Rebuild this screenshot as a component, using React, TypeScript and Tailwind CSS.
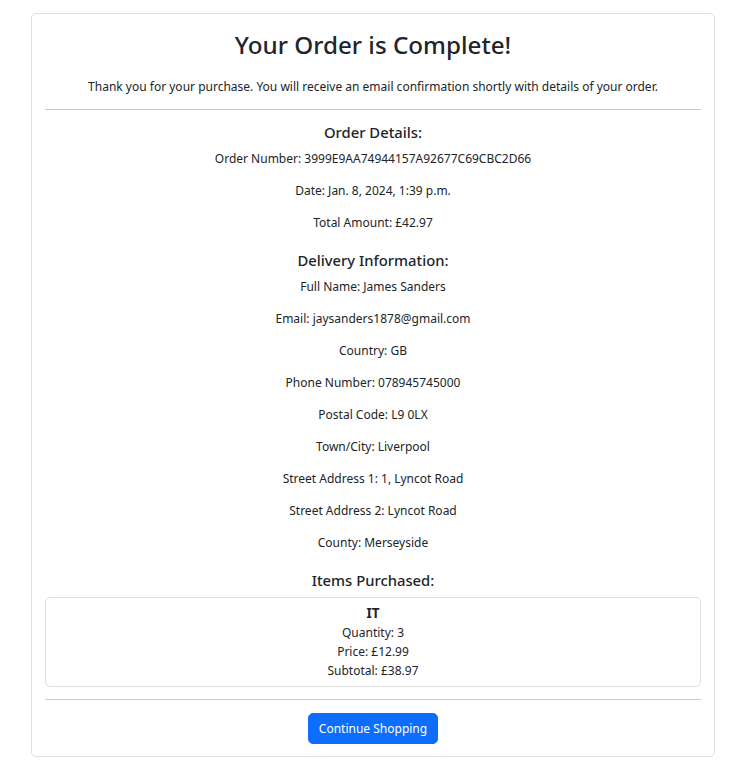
import React from "react";

const order = {
  number: "3999E9AA74944157A92677C69CBC2D66",
  date: "Jan. 8, 2024, 1:39 p.m.",
  total: "£42.97",
};

const delivery: [string, string][] = [
  ["Full Name", "James Sanders"],
  ["Email", "jaysanders1878@gmail.com"],
  ["Country", "GB"],
  ["Phone Number", "078945745000"],
  ["Postal Code", "L9 0LX"],
  ["Town/City", "Liverpool"],
  ["Street Address 1", "1, Lyncot Road"],
  ["Street Address 2", "Lyncot Road"],
  ["County", "Merseyside"],
];

const items = [{ name: "IT", quantity: 3, price: "£12.99", subtotal: "£38.97" }];

const Line: React.FC<{ label: string; value: string | number }> = ({ label, value }) => (
  <p className="mb-[12.8px]">
    {label}: {value}
  </p>
);

const SectionTitle: React.FC<{ children: React.ReactNode }> = ({ children }) => (
  <h5 className="mb-[6.4px] text-[14.8px] font-medium leading-[19.2px]">{children}</h5>
);

const App: React.FC = () => {
  return (
    <div
      className="min-h-screen bg-white px-[31px] pt-[13px] text-[12px] leading-[19.2px] text-[#212529]"
      style={{ fontFamily: '"Noto Sans", "Liberation Sans", sans-serif' }}
    >
      <div className="w-[684px] rounded-[5px] border border-[#dfdfdf] px-[12.8px] pt-[12px] pb-[12px] text-center">
        <h1 className="mb-[12.8px] text-[24.2px] font-medium leading-[38.4px]">Your Order is Complete!</h1>
        <p className="mb-[12.8px]">
          Thank you for your purchase. You will receive an email confirmation shortly with details of your order.
        </p>
        <hr className="my-[12.8px] border-t border-[#c8c9ca]" />

        <SectionTitle>Order Details:</SectionTitle>
        <Line label="Order Number" value={order.number} />
        <Line label="Date" value={order.date} />
        <Line label="Total Amount" value={order.total} />

        <div className="pt-[6.4px]">
          <SectionTitle>Delivery Information:</SectionTitle>
          {delivery.map(([label, value]) => (
            <Line key={label} label={label} value={value} />
          ))}
        </div>

        <div className="pt-[6.4px]">
          <SectionTitle>Items Purchased:</SectionTitle>
          {items.map((item) => (
            <div key={item.name} className="rounded-[5px] border border-[#dfdfdf] px-[6.4px] pt-[6px] pb-[5.6px]">
              <h6 className="text-[13.5px] font-bold leading-[19.2px]">{item.name}</h6>
              <p>Quantity: {item.quantity}</p>
              <p>Price: {item.price}</p>
              <p>Subtotal: {item.subtotal}</p>
            </div>
          ))}
        </div>

        <hr className="my-[12.4px] border-t border-[#c8c9ca]" />
        <button className="rounded-[5px] border border-[#0d6efd] bg-[#0d6efd] px-[9.6px] py-[4.8px] text-[12px] leading-[19.2px] text-white">
          Continue Shopping
        </button>
      </div>
    </div>
  );
};

export default App;
